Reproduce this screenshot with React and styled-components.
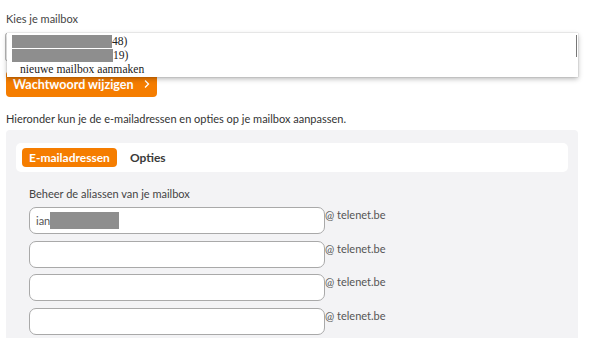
import React from 'react'
import styled, { createGlobalStyle } from 'styled-components'

const GlobalStyle = createGlobalStyle`
  html, body {
    margin: 0;
    padding: 0;
    background: #ffffff;
    font-family: Lato, "Open Sans", sans-serif;
    color: #3d3d3d;
  }
`

const Page = styled.div`
  width: 572px;
  padding: 12px 14px 0 6px;
`

const Label = styled.div`
  font-size: 11px;
  line-height: 14px;
  color: #444;
  margin-bottom: 7px;
`

const SelectWrap = styled.div`
  position: relative;
  margin-bottom: 10px;
`

const SelectBox = styled.div`
  height: 28px;
  border: 1px solid #b8b8b8;
  border-radius: 2px;
  box-sizing: border-box;
  margin-left: -1px;
`

const Popup = styled.div`
  position: absolute;
  top: 0;
  left: 1px;
  right: 0;
  height: 44px;
  background: #fff;
  box-shadow: 0 2px 5px rgba(0, 0, 0, 0.28), 0 0 1px rgba(0, 0, 0, 0.3);
  font-family: "Liberation Serif", serif;
  font-size: 11.6px;
  color: #222;
  z-index: 2;
  padding-top: 1px;
  box-sizing: border-box;
`

const Thumb = styled.div`
  position: absolute;
  right: 1px;
  top: 2px;
  width: 1px;
  height: 22px;
  background: #777;
`

const Option = styled.div`
  display: flex;
  align-items: center;
  height: 14px;
  padding-left: ${({ $indent }) => ($indent ? '13px' : '5px')};
  white-space: nowrap;
`

const Redact = styled.span`
  display: inline-block;
  width: ${({ $w }) => $w}px;
  height: ${({ $h }) => $h || 13}px;
  margin-left: ${({ $shift }) => $shift || 0}px;
  background: #8e8e8e;
`

const OrangeButton = styled.button`
  display: flex;
  align-items: center;
  gap: 9px;
  height: 26px;
  padding: 0 0 0 7px;
  width: 151px;
  border: none;
  border-radius: 4px;
  background: #f57d00;
  color: #fff;
  font-family: Lato, sans-serif;
  font-weight: 700;
  font-size: 12.5px;
  cursor: pointer;
`

const Intro = styled.p`
  margin: 15px 0 4px;
  font-size: 11px;
  line-height: 14px;
  color: #333;
`

const Panel = styled.div`
  background: #f3f3f5;
  border-radius: 4px 4px 0 0;
  padding: 13px 10px 6px;
  height: 210px;
  box-sizing: border-box;
`

const TabBar = styled.div`
  display: flex;
  align-items: center;
  gap: 6px;
  height: 29px;
  background: #fff;
  border-radius: 5px;
  padding: 0 6px;
`

const Tab = styled.div`
  font-size: 12px;
  line-height: 15px;
  font-weight: 700;
  padding: 2px 7px;
  border-radius: 4px;
  background: ${({ $active }) => ($active ? '#f57d00' : 'transparent')};
  color: ${({ $active }) => ($active ? '#fff' : '#3a3a3a')};
`

const Section = styled.div`
  padding: 15px 0 0 13px;
`

const SectionTitle = styled.div`
  font-size: 11px;
  line-height: 14px;
  color: #444;
  margin-bottom: 6px;
`

const Rows = styled.div`
  display: flex;
  flex-direction: column;
  gap: 6.5px;
`

const Row = styled.div`
  display: flex;
  align-items: flex-start;
`

const Field = styled.div`
  display: flex;
  align-items: center;
  width: 296px;
  height: 27px;
  box-sizing: border-box;
  border: 1px solid #a9a9a9;
  border-radius: 7px;
  background: #fff;
  padding-left: 6px;
  font-size: 11px;
  color: #555;
`

const Domain = styled.span`
  font-size: 11px;
  line-height: 14px;
  color: #555;
  padding-top: 1px;
`

const Chevron = () => (
  <svg width="8" height="10" viewBox="0 0 8 10">
    <path d="M2 1.5 L5.5 5 L2 8.5" fill="none" stroke="#fff" strokeWidth="1.3" />
  </svg>
)

export default function App() {
  const aliases = ['ian.', '', '', '']
  return (
    <Page>
      <GlobalStyle />
      <Label>Kies je mailbox</Label>
      <SelectWrap>
        <SelectBox />
        <Popup>
          <Thumb />
          <Option><Redact $w={100} />48)</Option>
          <Option><Redact $w={101} />19)</Option>
          <Option $indent>nieuwe mailbox aanmaken</Option>
        </Popup>
      </SelectWrap>
      <OrangeButton>
        Wachtwoord wijzigen <Chevron />
      </OrangeButton>
      <Intro>Hieronder kun je de e-mailadressen en opties op je mailbox aanpassen.</Intro>
      <Panel>
        <TabBar>
          <Tab $active>E-mailadressen</Tab>
          <Tab>Opties</Tab>
        </TabBar>
        <Section>
          <SectionTitle>Beheer de aliassen van je mailbox</SectionTitle>
          <Rows>
            {aliases.map((a, i) => (
              <Row key={i}>
                <Field>
                  {a}
                  {a && <Redact $w={69} $h={17} $shift={-3} />}
                </Field>
                <Domain>@ telenet.be</Domain>
              </Row>
            ))}
          </Rows>
        </Section>
      </Panel>
    </Page>
  )
}
